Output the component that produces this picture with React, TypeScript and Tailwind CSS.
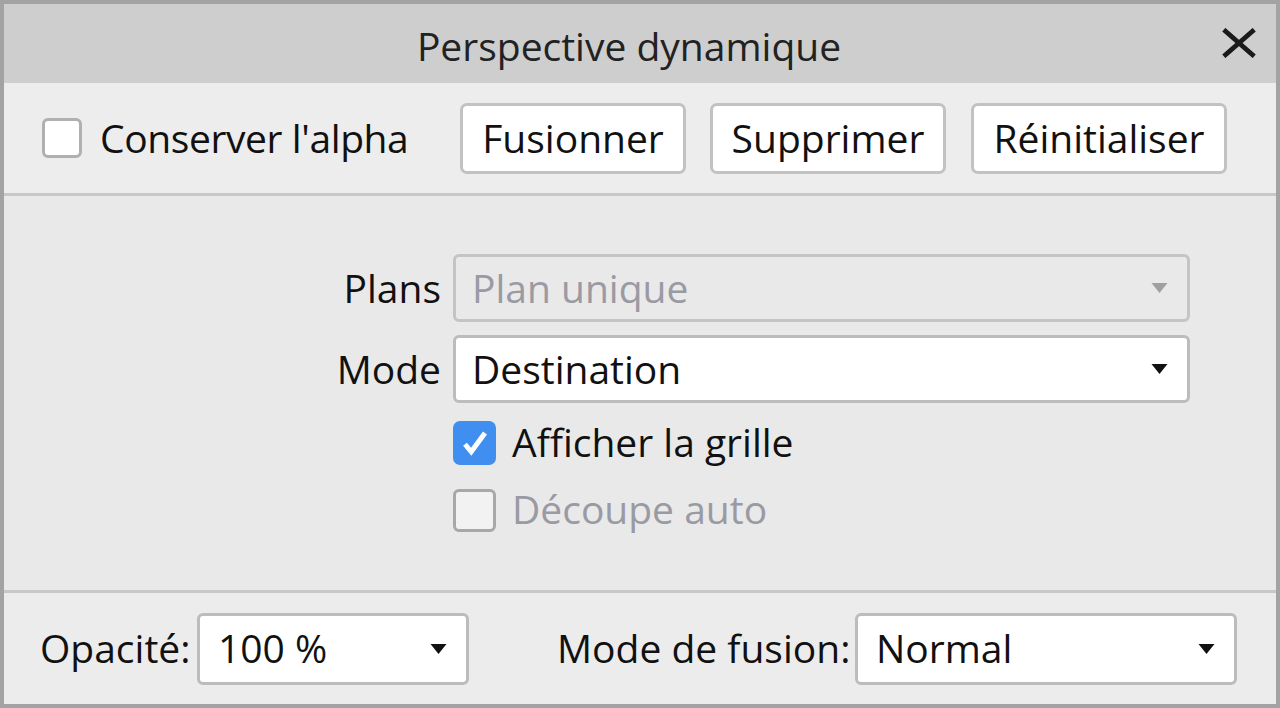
import React from 'react';

const font = { fontFamily: '"Open Sans", "Noto Sans", sans-serif' };

function Caret({ className = '' }: { className?: string }) {
  return (
    <svg viewBox="0 0 16 10" className={`w-[19px] h-[10px] ${className}`} fill="currentColor">
      <path d="M0 0h16L8 10z" />
    </svg>
  );
}

function Select({ value, disabled = false, className = '' }: { value: string; disabled?: boolean; className?: string }) {
  return (
    <div
      className={`flex items-center justify-between border-[3px] rounded-[6px] ${
        disabled ? 'bg-[#e9e9e9] border-[#c4c4c4] text-[#9a9aa4]' : 'bg-white border-[#bcbcbc] text-[#111]'
      } ${className}`}
    >
      <span className="-mt-[2px]">{value}</span>
      <Caret className={disabled ? 'text-[#a0a0a0]' : 'text-[#111]'} />
    </div>
  );
}

function Button({ label, className = '' }: { label: string; className?: string }) {
  return (
    <div
      className={`h-[71px] flex items-center justify-center bg-white border-[3px] border-[#c2c2c2] rounded-[7px] text-[#111] ${className}`}
    >
      <span className="-mt-[2px]">{label}</span>
    </div>
  );
}

export default function App() {
  return (
    <div
      className="w-[1280px] h-[708px] bg-[#ececec] border-[4px] border-[#a3a3a3] flex flex-col text-[39px] leading-none text-[#111] overflow-hidden"
      style={font}
    >
      {/* titre */}
      <div className="h-[79px] shrink-0 bg-[#cecece] flex items-center justify-center relative pr-[22px]">
        <span className="text-[#222] mt-[4px]">Perspective dynamique</span>
        <svg
          viewBox="0 0 40 30"
          className="absolute right-[18px] top-[24px] w-[38px] h-[30px] text-[#1a1a1a]"
          fill="none"
          stroke="currentColor"
          strokeWidth="5"
        >
          <path d="M4 1L36 29M36 1L4 29" />
        </svg>
      </div>

      {/* barre d'outils */}
      <div className="h-[113px] shrink-0 flex items-center pl-[38px] border-b-[3px] border-[#c8c8c8] bg-[#ededed]">
        <div className="w-[40px] h-[40px] bg-white border-[3px] border-[#b0b0b0] rounded-[6px] shrink-0" />
        <span className="ml-[18px] mt-[-2px] w-[360px] shrink-0 tracking-[-0.4px]">Conserver l'alpha</span>
        <Button label="Fusionner" className="w-[226px]" />
        <Button label="Supprimer" className="ml-[24px] w-[236px]" />
        <Button label="Réinitialiser" className="ml-[25px] w-[256px]" />
      </div>

      {/* options */}
      <div className="flex-1 bg-[#e9e9e9] border-b-[3px] border-[#c8c8c8] pt-[58px]">
        <div className="grid grid-cols-[437px_737px] gap-x-[12px] gap-y-[13px] items-center">
          <span className="text-right -mt-[2px]">Plans</span>
          <Select value="Plan unique" disabled className="h-[68px] pl-[16px] pr-[18px]" />
          <span className="text-right -mt-[2px]">Mode</span>
          <Select value="Destination" className="h-[68px] pl-[16px] pr-[18px]" />
        </div>
        <div className="ml-[449px] mt-[18px] flex flex-col gap-[24px]">
          <div className="flex items-center">
            <div className="w-[43px] h-[44px] bg-[#3f8ef0] rounded-[7px] flex items-center justify-center">
              <svg viewBox="0 0 24 24" className="w-[30px] h-[30px]" fill="none" stroke="white" strokeWidth="4">
                <path d="M4 13l5 6L20 4" />
              </svg>
            </div>
            <span className="ml-[16px] -mt-[4px]">Afficher la grille</span>
          </div>
          <div className="flex items-center">
            <div className="w-[43px] h-[43px] bg-[#f2f2f2] border-[3px] border-[#a8a8a8] rounded-[6px]" />
            <span className="ml-[16px] -mt-[4px] text-[#9a9aa4]">Découpe auto</span>
          </div>
        </div>
      </div>

      {/* pied */}
      <div className="h-[111px] shrink-0 flex items-center pl-[36px] bg-[#ececec]">
        <span className="w-[157px] shrink-0 -mt-[2px]">Opacité:</span>
        <Select value="100 %" className="w-[272px] h-[72px] pl-[18px] pr-[18px] shrink-0" />
        <span className="ml-[88px] w-[298px] shrink-0 -mt-[2px]">Mode de fusion:</span>
        <Select value="Normal" className="w-[382px] h-[72px] pl-[18px] pr-[18px] shrink-0" />
      </div>
    </div>
  );
}
